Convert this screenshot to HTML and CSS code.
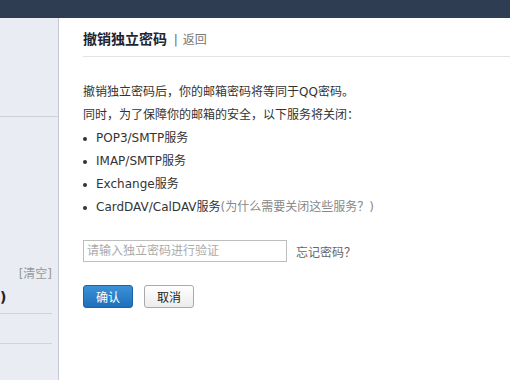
FILE: index.html
```html
<!DOCTYPE html>
<html lang="zh-CN">
<head>
  <meta charset="UTF-8">
  <title>撤销独立密码</title>
  <link rel="stylesheet" href="styles.css">
</head>
<body>

  <div class="topbar"></div>

  <div class="layout">
    <!-- left folder list (cut off) -->
    <div class="sidebar">
      <div class="side-top"></div>
      <div class="side-clear">[清空]</div>
      <div class="side-item">)</div>
      <div class="side-line"></div>
      <div class="side-line2"></div>
    </div>

    <!-- main panel -->
    <div class="main">
      <div class="title-row">
        <span class="title">撤销独立密码</span>
        <span class="sep">|</span>
        <a class="back" href="#">返回</a>
      </div>

      <div class="desc">
        <p>撤销独立密码后，你的邮箱密码将等同于QQ密码。</p>
        <p>同时，为了保障你的邮箱的安全，以下服务将关闭：</p>
        <ul class="services">
          <li>POP3/SMTP服务</li>
          <li>IMAP/SMTP服务</li>
          <li>Exchange服务</li>
          <li>CardDAV/CalDAV服务<a class="why" href="#">(为什么需要关闭这些服务？)</a></li>
        </ul>
      </div>

      <div class="verify">
        <input class="pwd" type="password" placeholder="请输入独立密码进行验证">
        <a class="forgot" href="#">忘记密码？</a>
      </div>

      <div class="actions">
        <button class="btn btn-ok">确认</button>
        <button class="btn btn-cancel">取消</button>
      </div>
    </div>
  </div>

</body>
</html>
```

FILE: styles.css
```css
body {
  margin: 0;
  background: #fff;
  color: #333;
  font-family: "DejaVu Sans", Verdana, "Noto Sans CJK SC", sans-serif;
  font-size: 12px;
  height: 380px;
  overflow: hidden;
}

a {
  text-decoration: none;
}

.topbar {
  height: 18px;
  background: #2f3d52;
}

.layout {
  display: flex;
  height: 362px;
}

/* Sidebar */
.sidebar {
  width: 52px;
  padding-right: 6px;
  background: #e9ecf2;
  border-right: 1px solid #c3c8d1;
  flex-shrink: 0;
}

.side-top {
  height: 98px;
  border-bottom: 1px solid #cdd2da;
  margin-right: -6px;
}

.side-clear {
  margin-top: 149px;
  text-align: right;
  color: #999;
  line-height: 16px;
}

.side-item {
  margin-top: 7px;
  font-size: 14px;
  font-weight: bold;
  color: #222;
  line-height: 16px;
}

.side-line {
  margin-top: 8px;
  border-top: 1px solid #cfd3da;
}

.side-line2 {
  margin-top: 29px;
  border-top: 1px solid #cfd3da;
}

/* Main */
.main {
  flex: 1;
  padding-left: 24px;
}

.title-row {
  height: 38px;
  line-height: 43px;
  border-bottom: 1px solid #e3e3e3;
}

.title {
  font-size: 14px;
  font-weight: bold;
  color: #1d2433;
}

.sep {
  color: #666;
  margin: 0 1px 0 3px;
}

.back {
  color: #777;
}

.desc {
  margin-top: 24px;
  line-height: 23px;
}

.desc p {
  margin: 0;
}

.services {
  list-style: none;
  margin: 0;
  padding: 0;
}

.services li {
  position: relative;
  padding-left: 13px;
}

.services li::before {
  content: "";
  position: absolute;
  left: 0;
  top: 10px;
  width: 4px;
  height: 4px;
  border-radius: 50%;
  background: #333;
}

.why {
  color: #888;
}

.verify {
  margin-top: 21px;
  display: flex;
  align-items: center;
}

.pwd {
  width: 196px;
  height: 20px;
  padding: 0 3px;
  border: 1px solid #bdbdbd;
  font-size: 12px;
  font-family: inherit;
  box-sizing: content-box;
  outline: none;
}

.pwd::placeholder {
  color: #aaa;
}

.forgot {
  margin-left: 9px;
  color: #666;
}

.actions {
  margin-top: 23px;
  display: flex;
  gap: 11px;
}

.btn {
  width: 50px;
  height: 23px;
  padding: 0;
  border-radius: 3px;
  font-size: 12px;
  font-family: inherit;
  cursor: pointer;
}

.btn-ok {
  color: #fff;
  background: linear-gradient(#3b91d8, #1f6fba);
  border: 1px solid #1d63a6;
}

.btn-cancel {
  color: #222;
  background: linear-gradient(#fff, #ececec);
  border: 1px solid #a9a9a9;
}
```
